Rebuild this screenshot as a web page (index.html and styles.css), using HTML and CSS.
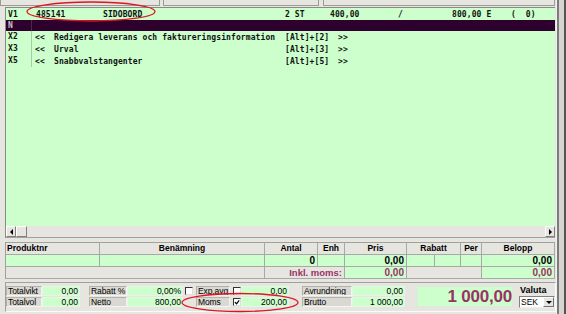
FILE: index.html
```html
<!DOCTYPE html>
<html lang="sv">
<head>
    <meta charset="UTF-8">
    <title>Order</title>
    <link rel="stylesheet" href="styles.css">
</head>
<body>
    <div class="screen">
        <div class="main">
            <div class="topbar">
                <div class="tb tb1"></div>
                <div class="tb tb2"></div>
                <div class="tb tb3"></div>
            </div>

            <div class="listframe">
                <div class="list">
                    <div class="lrow">
                        <span class="c-key">V1</span>
                        <span class="c-art">485141</span>
                        <span class="c-name">SIDOBORD</span>
                        <span class="c-qty">2 ST</span>
                        <span class="c-price">400,00</span>
                        <span class="c-per">/</span>
                        <span class="c-sum">800,00 E</span>
                        <span>(  0)</span>
                    </div>
                    <div class="lrow sel">
                        <span class="c-code">N</span>
                    </div>
                    <div class="lrow">
                        <span class="c-code">X2</span>
                        <span class="c-arrow">&lt;&lt;</span>
                        <span class="c-text">Redigera leverans och faktureringsinformation</span>
                        <span class="c-short">[Alt]+[2]</span>
                        <span>&gt;&gt;</span>
                    </div>
                    <div class="lrow">
                        <span class="c-code">X3</span>
                        <span class="c-arrow">&lt;&lt;</span>
                        <span class="c-text">Urval</span>
                        <span class="c-short">[Alt]+[3]</span>
                        <span>&gt;&gt;</span>
                    </div>
                    <div class="lrow">
                        <span class="c-code">X5</span>
                        <span class="c-arrow">&lt;&lt;</span>
                        <span class="c-text">Snabbvalstangenter</span>
                        <span class="c-short">[Alt]+[5]</span>
                        <span>&gt;&gt;</span>
                    </div>
                </div>
                <div class="hscroll">
                    <div class="sbtn"><span class="arr-l"></span></div>
                    <div class="thumb"></div>
                    <div class="track"></div>
                    <div class="sbtn"><span class="arr-r"></span></div>
                </div>
            </div>

            <div class="grid">
                <div class="g gh left">Produktnr</div>
                <div class="g gh">Benämning</div>
                <div class="g gh">Antal</div>
                <div class="g gh">Enh</div>
                <div class="g gh">Pris</div>
                <div class="g gh span2">Rabatt</div>
                <div class="g gh">Per</div>
                <div class="g gh">Belopp</div>

                <div class="g gd"></div>
                <div class="g gd"></div>
                <div class="g gd">0</div>
                <div class="g gd"></div>
                <div class="g gd">0,00</div>
                <div class="g gd"></div>
                <div class="g gd"></div>
                <div class="g gd"></div>
                <div class="g gd">0,00</div>

                <div class="g gx span2"></div>
                <div class="g gx span2 right purple">Inkl. moms:</div>
                <div class="g gd purple">0,00</div>
                <div class="g gx span3"></div>
                <div class="g gd purple">0,00</div>
            </div>

            <div class="totals">
                <div class="tl">Totalvikt</div>
                <div class="tv">0,00</div>
                <div></div>
                <div class="tl">Rabatt %</div>
                <div class="tv">0,00%</div>
                <div class="cbcell"><span class="cb cb1"></span></div>
                <div class="tl">Exp.avg.</div>
                <div class="cbcell"><span class="cb cb2"></span></div>
                <div class="tv">0,00</div>
                <div></div>
                <div class="tl">Avrundning</div>
                <div class="tv">0,00</div>
                <div></div>
                <div class="big">1 000,00</div>
                <div></div>
                <div class="vl">Valuta</div>

                <div class="tl">Totalvol</div>
                <div class="tv">0,00</div>
                <div></div>
                <div class="tl">Netto</div>
                <div class="tv">800,00</div>
                <div></div>
                <div class="tl">Moms</div>
                <div class="cbcell">
                    <span class="cb cb2">
                        <svg width="7" height="7" viewBox="0 0 7 7"><path d="M1 3 L3 5 L6 1" fill="none" stroke="#000" stroke-width="1.4"/></svg>
                    </span>
                </div>
                <div class="tv">200,00</div>
                <div></div>
                <div class="tl">Brutto</div>
                <div class="tv">1 000,00</div>
                <div></div>
                <div></div>
                <div class="sel-box">
                    <span class="sel-text">SEK</span>
                    <span class="sel-btn"><span class="arr-d"></span></span>
                </div>
            </div>
        </div>
        <div class="edge"></div>

        <svg class="marks" width="566" height="314" viewBox="0 0 566 314">
            <ellipse cx="91" cy="11.5" rx="64" ry="9.5" fill="none" stroke="#e0141e" stroke-width="1.3"/>
            <ellipse cx="240" cy="302.5" rx="58" ry="9" fill="none" stroke="#e0141e" stroke-width="1.3"/>
        </svg>
    </div>
</body>
</html>
```

FILE: styles.css
```css
* {
    box-sizing: border-box;
}
body {
    margin: 0;
    background: #e6e5e0;
    font-family: 'Liberation Sans', Arial, sans-serif;
    font-size: 9px;
    color: #000;
}
.screen {
    position: relative;
    width: 566px;
    height: 314px;
    display: flex;
    overflow: hidden;
}
.main {
    width: 556px;
}
.edge {
    width: 10px;
    background: linear-gradient(to right, #f0f0ee 0 1px, #7c7c7c 1px 3px, #d6d5d0 3px 8px, #555 8px 10px);
}
.marks {
    position: absolute;
    left: 0;
    top: 0;
    pointer-events: none;
}

/* top fields */
.topbar {
    height: 7px;
    display: flex;
}
.tb {
    height: 6px;
    border: 1px solid #9c9a95;
    border-top: none;
}
.tb1 { width: 160px; margin-right: 3px; }
.tb2 { width: 156px; margin-right: 4px; }
.tb3 { width: 232px; }

/* green list */
.listframe {
    margin-left: 5px;
    width: 550px;
    border-left: 1px solid #8a8a8a;
    border-top: 1px solid #8a8a8a;
}
.list {
    height: 218px;
    background: #ccffcc;
}
.lrow {
    display: flex;
    align-items: center;
    height: 12px;
    font-family: 'DejaVu Sans Mono', 'Liberation Mono', monospace;
    font-weight: bold;
    font-size: 8px;
    letter-spacing: 0.1px;
    white-space: pre;
    color: #111;
}
.lrow.sel {
    height: 11px;
    background: #2e002e;
    color: #c8c8c8;
}
.lrow.sel .c-code {
    border-right-color: #4a2a4a;
}
.c-key { width: 30px; padding-left: 2px; }
.c-art { width: 67px; }
.c-name { width: 182px; }
.c-qty { width: 45px; }
.c-price { width: 68px; }
.c-per { width: 54px; }
.c-sum { width: 59px; }
.c-code {
    width: 26px;
    height: 100%;
    line-height: 12px;
    padding-left: 2px;
    border-right: 1px solid #aac8aa;
}
.c-arrow { width: 22px; padding-left: 3px; }
.c-text { width: 231px; }
.c-short { width: 53px; }

/* horizontal scrollbar */
.hscroll {
    height: 12px;
    display: flex;
    border-bottom: 1px solid #a0a0a0;
}
.sbtn, .thumb {
    width: 10px;
    height: 11px;
    border: 1px solid #fff;
    border-right-color: #808080;
    border-bottom-color: #808080;
    display: flex;
    align-items: center;
    justify-content: center;
}
.thumb { width: 11px; }
.track { flex: 1; }
.arr-l, .arr-r, .arr-d {
    width: 0;
    height: 0;
    border: 3px solid transparent;
}
.arr-l { border-right-color: #000; border-left-width: 0; }
.arr-r { border-left-color: #000; border-right-width: 0; }
.arr-d { border-top-color: #000; border-bottom-width: 0; border-width: 3px 3px 0 3px; }

/* article grid */
.grid {
    margin: 4px 0 0 5px;
    width: 550px;
    display: grid;
    grid-template-columns: 94px 165px 53px 27px 62px 28px 26px 21px 73px;
    grid-template-rows: 12px 12px 12px;
    border-left: 1px solid #a0a0a0;
    border-top: 1px solid #a0a0a0;
}
.g {
    border-right: 1px solid #a8a8a8;
    border-bottom: 1px solid #a8a8a8;
    padding: 0 2px;
    line-height: 11px;
    white-space: nowrap;
    overflow: hidden;
}
.gh {
    font-weight: bold;
    font-size: 8.5px;
    text-align: center;
}
.gh.left { text-align: left; padding-left: 1px; }
.gd {
    background: #ccffcc;
    text-align: right;
    font-weight: bold;
    font-size: 10px;
}
.gx { background: #e6e5e0; }
.right {
    text-align: right;
    font-weight: bold;
    font-size: 9.5px;
}
.span2 { grid-column: span 2; }
.span3 { grid-column: span 3; }
.purple { color: #993366; }

/* totals */
.totals {
    margin: 3px 0 0 5px;
    width: 551px;
    height: 30px;
    padding-top: 3px;
    border: 1px solid #a0a0a0;
    border-right-color: #fafafa;
    border-bottom-color: #fafafa;
    display: grid;
    grid-template-columns: 36px 38px 9px 38px 56px 13px 34px 11px 48px 13px 50px 53px 12px 96px 6px 36px;
    grid-template-rows: 10px 10px;
    row-gap: 1px;
    font-size: 8.5px;
}
.tl {
    background: #d9d8d2;
    border: 1px solid #b3b1ab;
    border-right-color: #f4f4f2;
    border-bottom-color: #f4f4f2;
    padding-left: 1px;
    line-height: 8px;
    white-space: nowrap;
    overflow: hidden;
    letter-spacing: -0.1px;
}
.tv {
    background: #ccffcc;
    border: 1px solid #e4f6e4;
    text-align: right;
    padding-right: 1px;
    line-height: 8px;
    white-space: nowrap;
}
.cbcell {
    display: flex;
    align-items: center;
}
.cb {
    width: 8px;
    height: 8px;
    background: #fff;
    border: 1px solid #333;
    border-right-color: #ddd;
    border-bottom-color: #ddd;
    display: flex;
    align-items: center;
    justify-content: center;
}
.cb1 { margin-left: 2px; }
.cb2 { margin-left: 3px; }
.big {
    grid-row: span 2;
    background: #ccffcc;
    border: 1px solid #d8ecd8;
    color: #993366;
    font-weight: bold;
    font-size: 17px;
    line-height: 19px;
    text-align: right;
    letter-spacing: -0.2px;
}
.vl {
    font-weight: bold;
    font-size: 9px;
    line-height: 9px;
    padding-left: 1px;
}
.sel-box {
    height: 12px;
    margin-top: -1px;
    display: flex;
    background: #fff;
    border: 1px solid #808080;
    border-right-color: #eee;
    border-bottom-color: #eee;
}
.sel-text {
    flex: 1;
    line-height: 10px;
    padding-left: 1px;
}
.sel-btn {
    width: 11px;
    background: #e6e5e0;
    border: 1px solid #fff;
    border-right-color: #707070;
    border-bottom-color: #707070;
    display: flex;
    align-items: center;
    justify-content: center;
}
```
